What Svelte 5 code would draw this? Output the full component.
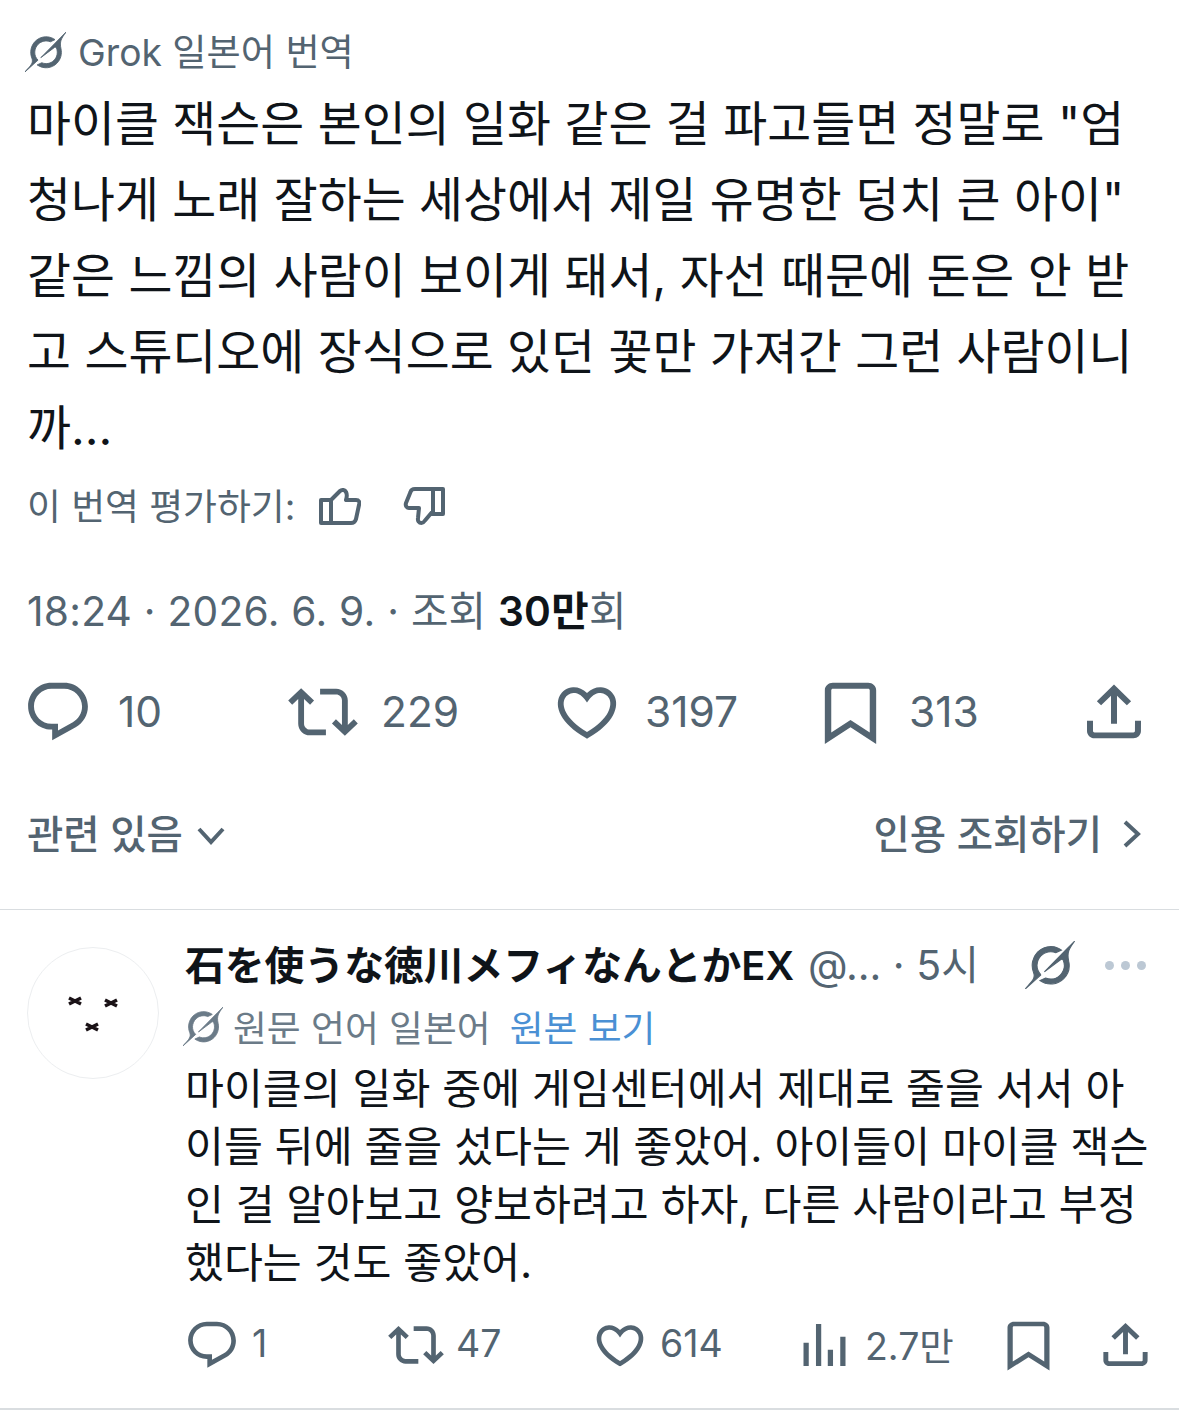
<script>
  const grokPath = 'M12.745 20.54l10.97-8.19c.539-.4 1.307-.244 1.564.38 1.349 3.288.746 7.241-1.938 9.955-2.683 2.714-6.417 3.31-9.83 1.954l-3.728 1.745c5.347 3.697 11.84 2.782 15.898-1.324 3.219-3.255 4.216-7.692 3.284-11.693l.008.009c-1.351-5.878.332-8.227 3.782-13.031L33 0l-4.54 4.59v-.014L12.743 20.544m-2.263 1.987c-3.837-3.707-3.175-9.446.1-12.755 2.42-2.449 6.388-3.448 9.852-1.979l3.72-1.737c-.67-.49-1.53-1.017-2.515-1.387-4.455-1.854-9.789-.931-13.41 2.728-3.483 3.523-4.579 8.94-2.697 13.561 1.405 3.454-.899 5.898-3.22 8.364C1.49 30.2.666 31.074 0 32l10.478-9.466';

  const icons = {
    reply: 'M1.751 10c0-4.42 3.584-8 8.005-8h4.366c4.49 0 8.129 3.64 8.129 8.13 0 2.96-1.607 5.68-4.196 7.11l-8.054 4.46v-3.69h-.067c-4.49.1-8.183-3.51-8.183-8.01zm8.005-6c-3.317 0-6.005 2.69-6.005 6 0 3.37 2.77 6.08 6.138 6.01l.351-.01h1.761v2.3l5.087-2.81c1.951-1.08 3.163-3.13 3.163-5.36 0-3.39-2.744-6.13-6.129-6.13H9.756z',
    retweet: 'M4.5 3.88l4.432 4.14-1.364 1.46L5.5 7.55V16c0 1.1.896 2 2 2H13v2H7.5c-2.209 0-4-1.79-4-4V7.55L1.432 9.48.068 8.02 4.5 3.88zM16.5 6H11V4h5.5c2.209 0 4 1.79 4 4v8.45l2.068-1.93 1.364 1.46-4.432 4.14-4.432-4.14 1.364-1.46 2.068 1.93V8c0-1.1-.896-2-2-2z',
    like: 'M16.697 5.5c-1.222-.06-2.679.51-3.89 2.16l-.805 1.09-.806-1.09C9.984 6.01 8.526 5.44 7.304 5.5c-1.243.07-2.349.78-2.91 1.91-.552 1.12-.633 2.78.479 4.82 1.074 1.97 3.257 4.27 7.129 6.61 3.87-2.34 6.052-4.64 7.126-6.61 1.111-2.04 1.03-3.7.477-4.82-.561-1.13-1.666-1.84-2.908-1.91zm4.187 7.69c-1.351 2.48-4.001 5.12-8.379 7.67l-.503.3-.504-.3c-4.379-2.55-7.029-5.19-8.382-7.67-1.36-2.5-1.41-4.86-.514-6.67.887-1.79 2.647-2.91 4.601-3.01 1.651-.09 3.368.56 4.798 2.01 1.429-1.45 3.146-2.1 4.796-2.01 1.954.1 3.714 1.22 4.601 3.01.896 1.81.846 4.17-.514 6.67z',
    views: 'M8.75 21V3h2v18h-2zM18 21V8.5h2V21h-2zM4 21l.004-10h2L6 21H4zm9.248 0v-7h2v7h-2z',
    bookmark: 'M4 4.5C4 3.12 5.119 2 6.5 2h11C18.881 2 20 3.12 20 4.5v18.44l-8-5.71-8 5.71V4.5zM6.5 4c-.276 0-.5.22-.5.5v14.56l6-4.29 6 4.29V4.5c0-.28-.224-.5-.5-.5h-11z',
    share: 'M12 2.59l5.7 5.7-1.41 1.42L13 6.41V16h-2V6.41l-3.3 3.3-1.41-1.42L12 2.59zM21 15l-.02 3.51c0 1.38-1.12 2.49-2.5 2.49H5.5C4.11 21 3 19.88 3 18.5V15h2v3.5c0 .28.22.5.5.5h12.98c.28 0 .5-.22.5-.5L19 15h2z'
  };

  const mainLines = [
    '마이클 잭슨은 본인의 일화 같은 걸 파고들면 정말로 "엄',
    '청나게 노래 잘하는 세상에서 제일 유명한 덩치 큰 아이"',
    '같은 느낌의 사람이 보이게 돼서, 자선 때문에 돈은 안 받',
    '고 스튜디오에 장식으로 있던 꽃만 가져간 그런 사람이니',
    '까...'
  ];
  const replyLines = [
    '마이클의 일화 중에 게임센터에서 제대로 줄을 서서 아',
    '이들 뒤에 줄을 섰다는 게 좋았어. 아이들이 마이클 잭슨',
    '인 걸 알아보고 양보하려고 하자, 다른 사람이라고 부정',
    '했다는 것도 좋았어.'
  ];
  const mainStats = [
    { icon: 'reply', count: '10' },
    { icon: 'retweet', count: '229' },
    { icon: 'like', count: '3197' },
    { icon: 'bookmark', count: '313' },
    { icon: 'share', count: '' }
  ];
  const replyStats = [
    { icon: 'reply', count: '1' },
    { icon: 'retweet', count: '47' },
    { icon: 'like', count: '614' },
    { icon: 'views', count: '2.7만' },
    { icon: 'bookmark', count: '' },
    { icon: 'share', count: '' }
  ];
</script>

<main class="page">
  <section class="tweet">
    <div class="translated">
      <svg class="grok" viewBox="0 0 33 32"><path d={grokPath} /></svg>
      <span>Grok 일본어 번역</span>
    </div>

    <p class="body">
      {#each mainLines as line}
        <span class="line">{line}</span>
      {/each}
    </p>

    <div class="rate">
      <span>이 번역 평가하기:</span>
      <svg class="thumb up" viewBox="0 0 42 38">
        <path d="M2 13h10v23H2zM12 13l9-9c2-2 5-1 6 1 1 2 1 5 0 8h10c3 0 4 2 3 5l-3 14c-1 3-2 4-5 4H12" />
      </svg>
      <svg class="thumb down" viewBox="0 0 42 38">
        <path d="M30 2h10v25H30zM30 2H12c-2 0-4 1-4.5 3L3 16c-1 3 1 5 3 5h10l-1 10c-.5 3 1 5 3.5 5 1.5 0 2.5-1 3.5-2.5L30 24" />
      </svg>
    </div>

    <div class="meta">18:24 · 2026. 6. 9. · 조회 <strong>30만</strong>회</div>

    <div class="stats">
      {#each mainStats as stat}
        <div class="stat">
          <svg class={stat.icon} viewBox="0 0 24 24" preserveAspectRatio="none"><path d={icons[stat.icon]} /></svg>
          {#if stat.count}<span>{stat.count}</span>{/if}
        </div>
      {/each}
    </div>

    <div class="links">
      <div class="link">
        <span>관련 있음</span>
        <svg class="chevron down-chev" viewBox="0 0 30 20"><path d="M3 3l12 13L27 3" /></svg>
      </div>
      <div class="link">
        <span>인용 조회하기</span>
        <svg class="chevron right-chev" viewBox="0 0 20 30"><path d="M3 3l13 12L3 27" /></svg>
      </div>
    </div>
  </section>

  <section class="reply-card">
    <div class="avatar">
      <svg viewBox="0 0 130 130">
        <g class="marks">
          <path d="M41 50l12 6M41 56l12-6M77 52l12 6M77 58l12-6M58 76l12 6M58 82l12-6" />
        </g>
      </svg>
    </div>

    <div class="content">
      <div class="head">
        <strong class="name">石を使うな徳川メフィなんとかEX</strong>
        <span class="handle">@... · 5시</span>
        <svg class="grok big" viewBox="0 0 33 32"><path d={grokPath} /></svg>
        <div class="dots"><i></i><i></i><i></i></div>
      </div>

      <div class="source">
        <svg class="grok small" viewBox="0 0 33 32"><path d={grokPath} /></svg>
        <span>원문 언어 일본어</span>
        <span class="source-link">원본 보기</span>
      </div>

      <p class="reply-body">
        {#each replyLines as line}
          <span class="line">{line}</span>
        {/each}
      </p>

      <div class="reply-stats">
        {#each replyStats as stat}
          <div class="stat">
            <svg class={stat.icon} viewBox="0 0 24 24" preserveAspectRatio="none"><path d={icons[stat.icon]} /></svg>
            {#if stat.count}<span>{stat.count}</span>{/if}
          </div>
        {/each}
      </div>
    </div>
  </section>
</main>

<style>
  :global(body) {
    background: #fff;
  }

  .page {
    width: 1179px;
    height: 1412px;
    overflow: hidden;
    font-family: Inter, "Noto Sans CJK KR", sans-serif;
    color: #0f1419;
  }

  .line {
    display: block;
    white-space: nowrap;
  }

  .tweet {
    padding: 26px 0 0 27px;
    height: 883px;
    border-bottom: 1px solid #d9dde0;
  }

  .translated {
    display: flex;
    align-items: center;
    gap: 12px;
    height: 48px;
    font-size: 37.2px;
    color: #536471;
  }

  .grok {
    fill: #536471;
    stroke: #536471;
    stroke-width: 0.7;
    flex: none;
  }

  .translated .grok {
    width: 41px;
    height: 40px;
    margin: 4px 0 0 -2px;
  }

  .body {
    margin: 12px 0 0;
    font-size: 47.8px;
    line-height: 76px;
  }

  .rate {
    display: flex;
    align-items: center;
    height: 48px;
    margin-top: 14px;
    font-size: 36.8px;
    color: #536471;
  }

  .thumb {
    width: 42px;
    height: 38px;
    margin-top: 4px;
    fill: none;
    stroke: #536471;
    stroke-width: 4;
    stroke-linejoin: round;
  }

  .thumb.up {
    margin-left: 24px;
  }

  .thumb.down {
    margin-left: 42px;
  }

  .meta {
    margin-top: 60px;
    height: 48px;
    line-height: 48px;
    font-size: 40.7px;
    letter-spacing: 0.25px;
    color: #536471;
    white-space: nowrap;
  }

  .meta strong {
    color: #0f1419;
    font-weight: 600;
  }

  .stats {
    display: grid;
    grid-template-columns: 265px 264px 260px 266px 1fr;
    margin-top: 43px;
    height: 60px;
    align-items: center;
  }

  .stat {
    display: flex;
    align-items: center;
    color: #536471;
  }

  .stat svg {
    fill: #536471;
    flex: none;
  }

  .stats .stat svg {
    width: 70px;
    height: 70px;
    margin: -2px 0 0 -4px;
  }

  .stats .stat svg.reply {
    margin-right: 2px;
  }

  .stats .stat svg.bookmark {
    width: 77px;
    margin-right: -3px;
  }

  .stats .stat svg.share {
    width: 72px;
  }

  .stats .stat span {
    margin: 0 0 4px 23px;
    font-size: 42.5px;
  }

  .links {
    display: flex;
    justify-content: space-between;
    align-items: center;
    margin-top: 70px;
    height: 44px;
    padding-right: 37px;
    font-size: 39.5px;
    font-weight: 500;
    color: #536471;
  }

  .link {
    display: flex;
    align-items: center;
  }

  .chevron {
    fill: none;
    stroke: #536471;
    stroke-width: 4;
  }

  .down-chev {
    width: 30px;
    height: 20px;
    margin: 10px 0 0 13px;
  }

  .right-chev {
    width: 20px;
    height: 30px;
    margin: 6px 0 0 20px;
  }

  .reply-card {
    display: flex;
    height: 500px;
    box-sizing: border-box;
    padding: 34px 0 0 27px;
    gap: 26px;
    border-bottom: 2px solid #d9dde0;
  }

  .avatar {
    width: 132px;
    height: 132px;
    margin-top: 3px;
    border: 1px solid #eceef0;
    border-radius: 50%;
    box-sizing: border-box;
    flex: none;
  }

  .avatar svg {
    display: block;
    width: 100%;
    height: 100%;
  }

  .marks path {
    fill: none;
    stroke: #1a1216;
    stroke-width: 3.5;
  }

  .content {
    flex: 1;
    min-width: 0;
  }

  .head {
    display: flex;
    align-items: center;
    height: 36px;
    white-space: nowrap;
  }

  .name {
    font-size: 39.8px;
    font-weight: 600;
    font-family: Inter, "Noto Sans CJK JP", sans-serif;
  }

  .handle {
    margin-left: 14px;
    font-size: 41px;
    color: #536471;
  }

  .big {
    width: 50px;
    height: 48px;
    margin: 6px 0 0 46px;
  }

  .dots {
    display: flex;
    gap: 7px;
    margin: 6px 0 0 30px;
  }

  .dots i {
    width: 9px;
    height: 9px;
    border-radius: 50%;
    background: #bcc8d4;
  }

  .source {
    display: flex;
    align-items: center;
    height: 44px;
    margin-top: 24px;
    font-size: 36.8px;
    color: #6b7b88;
    white-space: nowrap;
  }

  .small {
    width: 40px;
    height: 39px;
    margin-right: 10px;
    margin-left: -2px;
    fill: #6b7b88;
    stroke: #6b7b88;
  }

  .source-link {
    margin-left: 19px;
    color: #4a90d4;
  }

  .reply-body {
    margin: 12px 0 0;
    font-size: 42.3px;
    line-height: 58px;
  }

  .reply-stats {
    display: grid;
    grid-template-columns: 204px 204px 201px 204px 99px 1fr;
    margin-top: 24px;
    height: 52px;
    align-items: center;
  }

  .reply-stats .stat svg {
    width: 56px;
    height: 56px;
    margin-left: -1px;
  }

  .reply-stats .stat svg.views,
  .reply-stats .stat svg.bookmark {
    width: 63px;
  }

  .reply-stats .stat svg.views {
    margin-right: -3px;
  }

  .reply-stats .stat svg.share {
    width: 59px;
  }

  .reply-stats .stat span {
    margin: 0 0 2px 12px;
    font-size: 37.5px;
  }
</style>
